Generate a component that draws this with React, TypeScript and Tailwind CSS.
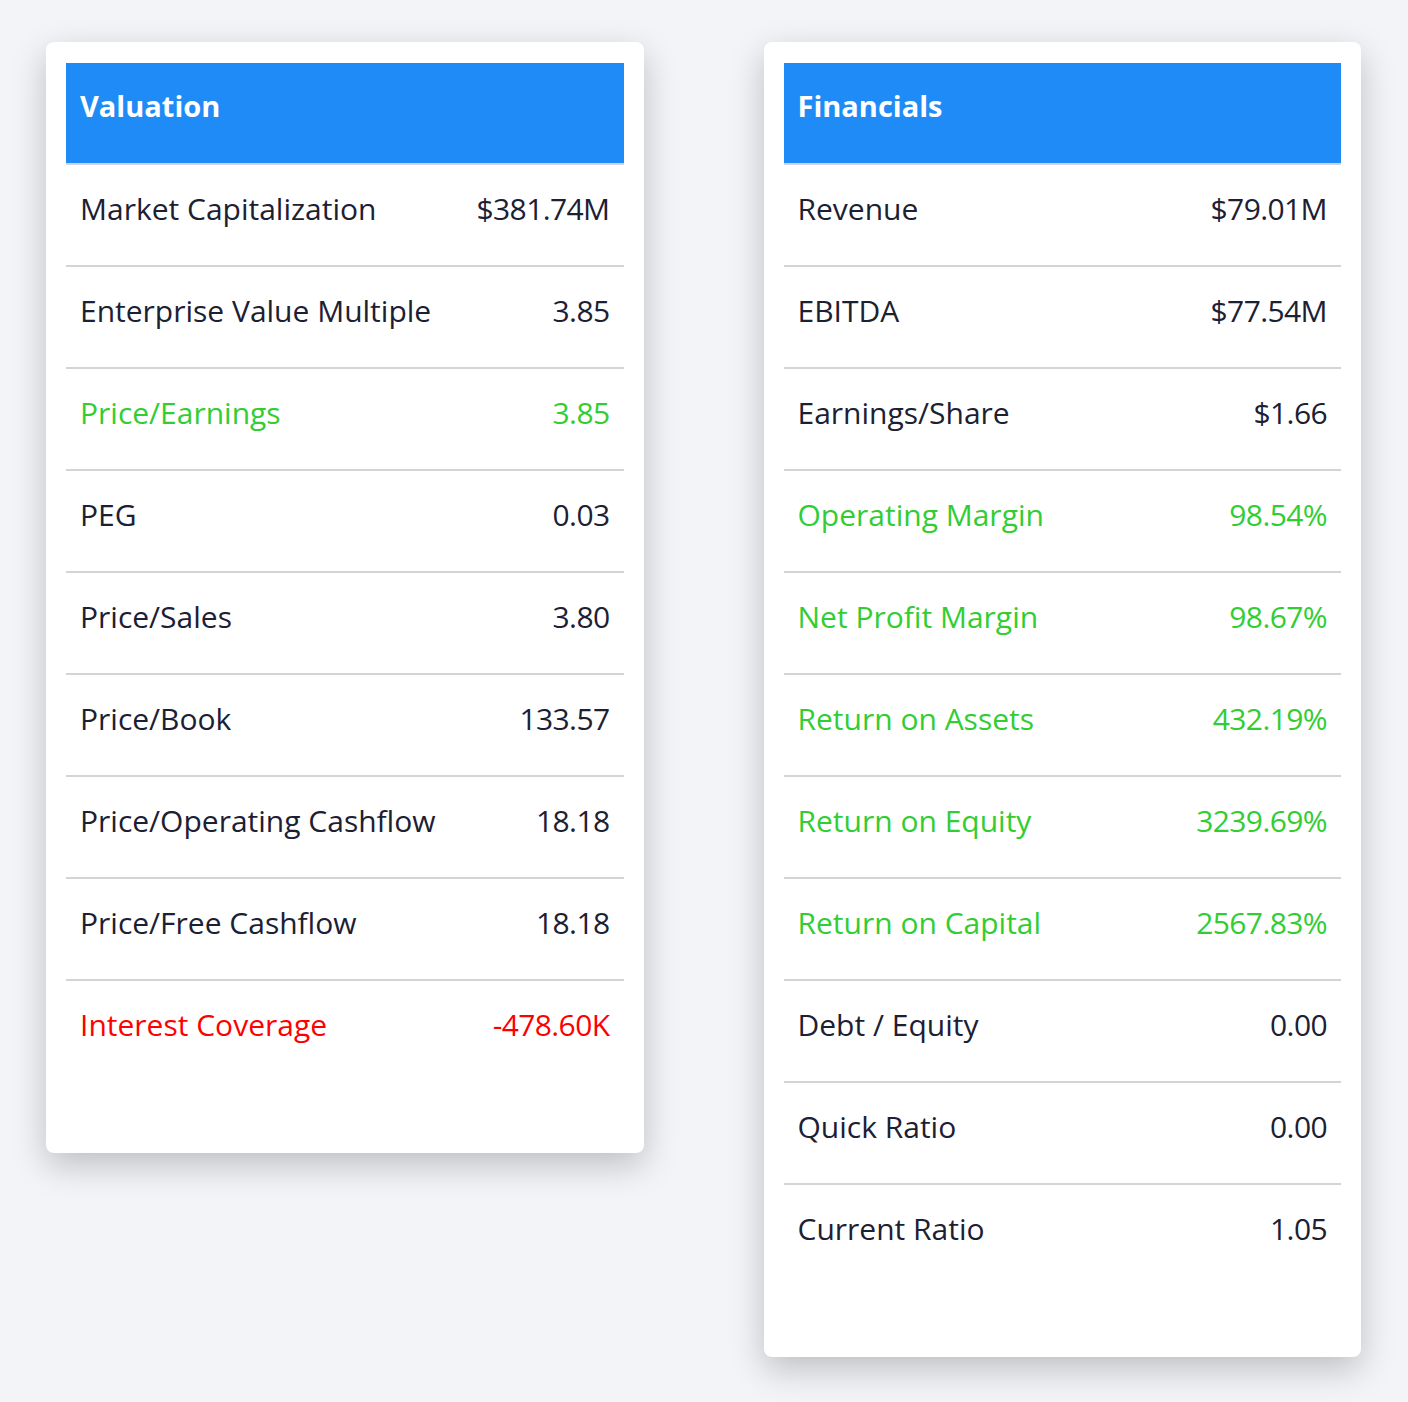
import React from "react";

type Row = { label: string; value: string; tone?: "good" | "bad" };

const valuation: Row[] = [
  { label: "Market Capitalization", value: "$381.74M" },
  { label: "Enterprise Value Multiple", value: "3.85" },
  { label: "Price/Earnings", value: "3.85", tone: "good" },
  { label: "PEG", value: "0.03" },
  { label: "Price/Sales", value: "3.80" },
  { label: "Price/Book", value: "133.57" },
  { label: "Price/Operating Cashflow", value: "18.18" },
  { label: "Price/Free Cashflow", value: "18.18" },
  { label: "Interest Coverage", value: "-478.60K", tone: "bad" },
];

const financials: Row[] = [
  { label: "Revenue", value: "$79.01M" },
  { label: "EBITDA", value: "$77.54M" },
  { label: "Earnings/Share", value: "$1.66" },
  { label: "Operating Margin", value: "98.54%", tone: "good" },
  { label: "Net Profit Margin", value: "98.67%", tone: "good" },
  { label: "Return on Assets", value: "432.19%", tone: "good" },
  { label: "Return on Equity", value: "3239.69%", tone: "good" },
  { label: "Return on Capital", value: "2567.83%", tone: "good" },
  { label: "Debt / Equity", value: "0.00" },
  { label: "Quick Ratio", value: "0.00" },
  { label: "Current Ratio", value: "1.05" },
];

const toneClass = (tone?: "good" | "bad") =>
  tone === "good" ? "text-[#32cd32]" : tone === "bad" ? "text-[#ff0000]" : "text-[#1c2033]";

const MetricsCard = ({ title, rows }: { title: string; rows: Row[] }) => {
  return (
    <div className="bg-white rounded-lg shadow-[0_12px_34px_rgba(0,0,0,0.22)] px-5 pt-[21px] pb-[72px]">
      <div className="h-[102px] bg-[#1f8bf6] flex items-center px-[14px] pb-[14px] border-b-2 border-[#d4d4d8]">
        <h3 className="text-[29px] font-bold text-white">{title}</h3>
      </div>
      <ul>
        {rows.map((row, i) => (
          <li
            key={row.label}
            className={`flex items-center justify-between px-[14px] pb-[13px] text-[30px] ${toneClass(row.tone)} ${
              i < rows.length - 1 ? "h-[102px] border-b-2 border-[#d4d4d8]" : "h-[100px]"
            }`}
          >
            <span>{row.label}</span>
            <span className="tracking-[-0.02em]">{row.value}</span>
          </li>
        ))}
      </ul>
    </div>
  );
};

export default function App() {
  return (
    <div
      className="min-h-screen bg-[#f3f4f8] grid grid-cols-2 gap-[120px] pl-[46px] pr-[47px] pt-[42px] items-start"
      style={{ fontFamily: '"Open Sans", sans-serif' }}
    >
      <MetricsCard title="Valuation" rows={valuation} />
      <MetricsCard title="Financials" rows={financials} />
    </div>
  );
}
